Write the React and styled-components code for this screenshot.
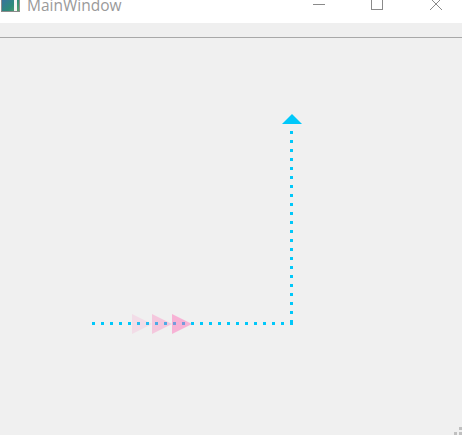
import React from 'react';
import styled, { createGlobalStyle } from 'styled-components';

const GlobalStyle = createGlobalStyle`
  html, body {
    margin: 0;
    padding: 0;
    width: 462px;
    height: 435px;
    overflow: hidden;
    background: #f0f0f0;
  }
`;

const Window = styled.div`
  width: 462px;
  height: 435px;
  display: flex;
  flex-direction: column;
  background: #f0f0f0;
  font-family: "Open Sans", "Noto Sans", sans-serif;
`;

const TitleBar = styled.div`
  height: 23px;
  background: #fff;
  overflow: hidden;
  flex-shrink: 0;
`;

const TitleRow = styled.div`
  display: flex;
  align-items: center;
  height: 20px;
  margin-top: -6px;
`;

const AppIcon = styled.div`
  width: 19px;
  height: 16px;
  margin-left: 1px;
  box-sizing: border-box;
  border: 1px solid #8c8c8c;
  background: linear-gradient(135deg, #3a6ea5 0%, #2d8a7a 60%, #5aa36a 100%);
  display: flex;
  justify-content: flex-end;
  padding-right: 2px;

  &::after {
    content: '';
    width: 3px;
    background: #f4f4f4;
  }
`;

const Title = styled.span`
  margin-left: 7px;
  margin-top: 1px;
  font-size: 15.5px;
  color: #9a9a9a;
  flex: 1;
  white-space: nowrap;
`;

const Controls = styled.div`
  display: flex;
  height: 100%;
  margin-right: -3px;
`;

const ControlButton = styled.div`
  width: 58.5px;
  height: 100%;
  display: flex;
  align-items: center;
  justify-content: center;
`;

const MenuBar = styled.div`
  height: 14px;
  background: #efefef;
  border-bottom: 1px solid #a8a8a8;
  flex-shrink: 0;
`;

const Canvas = styled.div`
  flex: 1;
  position: relative;
  background: #f0f0f0;

  svg {
    display: block;
  }
`;

const Grip = styled.div`
  position: absolute;
  right: 0;
  bottom: 0;
  width: 8px;
  height: 8px;
  background:
    linear-gradient(#c0c0c0, #c0c0c0) 5px 0 / 3px 3px no-repeat,
    linear-gradient(#c0c0c0, #c0c0c0) 0 5px / 3px 3px no-repeat,
    linear-gradient(#c0c0c0, #c0c0c0) 5px 5px / 3px 3px no-repeat;
`;

const CYAN = '#00c8fa';
const PINK = '#ff69b4';

const chevrons = [
  { x: 132, opacity: 0.15 },
  { x: 152, opacity: 0.3 },
  { x: 172, opacity: 0.46 },
];

export default function App() {
  return (
    <Window>
      <GlobalStyle />
      <TitleBar>
        <TitleRow>
          <AppIcon />
          <Title>MainWindow</Title>
          <Controls>
            <ControlButton>
              <svg width="12" height="12" viewBox="0 0 12 12">
                <line x1="0" y1="6.5" x2="12" y2="6.5" stroke="#8a8a8a" strokeWidth="1" />
              </svg>
            </ControlButton>
            <ControlButton>
              <svg width="12" height="12" viewBox="0 0 12 12">
                <rect x="0.5" y="0.5" width="11" height="11" fill="none" stroke="#8a8a8a" strokeWidth="1" />
              </svg>
            </ControlButton>
            <ControlButton>
              <svg width="12" height="12" viewBox="0 0 12 12">
                <path d="M0 0 L12 12 M12 0 L0 12" stroke="#8a8a8a" strokeWidth="1" />
              </svg>
            </ControlButton>
          </Controls>
        </TitleRow>
      </TitleBar>
      <MenuBar />
      <Canvas>
        <svg width="462" height="397" viewBox="0 0 462 397">
          <line x1="92" y1="285.5" x2="294" y2="285.5" stroke={CYAN} strokeWidth="3" strokeDasharray="3 6" />
          <line x1="291.5" y1="93" x2="291.5" y2="287" stroke={CYAN} strokeWidth="3" strokeDasharray="3 6" />
          <polygon points="282,86 292,76 302,86" fill={CYAN} />
          {chevrons.map(c => (
            <polygon
              key={c.x}
              points={`${c.x},276 ${c.x + 20},286 ${c.x},296`}
              fill={PINK}
              fillOpacity={c.opacity}
            />
          ))}
        </svg>
        <Grip />
      </Canvas>
    </Window>
  );
}
